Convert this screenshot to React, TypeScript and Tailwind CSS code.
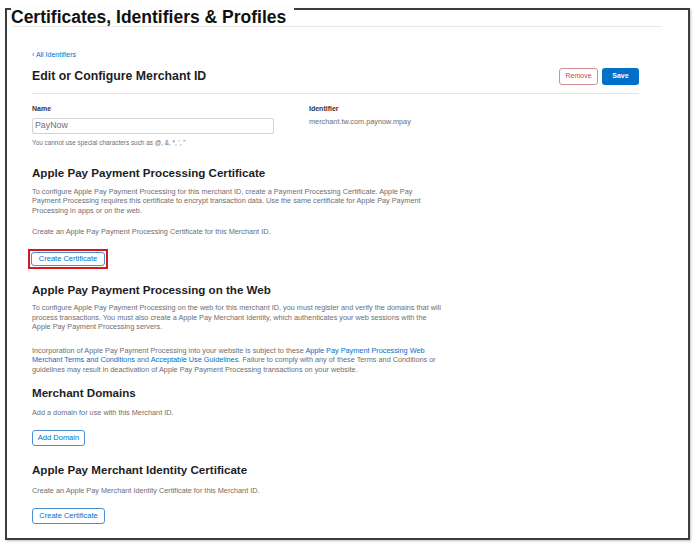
import React from 'react';

const body = 'text-[7.3px] leading-[9.6px] text-[#6e6e73] whitespace-nowrap';
const heading = 'text-[11.6px] leading-[14px] font-bold text-[#1d1d1f] whitespace-nowrap';
const link = 'text-[#0070c9]';

const OutlineButton: React.FC<{ label: string; className?: string }> = ({ label, className = '' }) => (
  <button
    className={`flex items-center justify-center rounded-[3px] border border-[#4b8fd3] bg-white px-[6px] text-[7.5px] leading-none text-[#0070c9] whitespace-nowrap ${className}`}
  >
    {label}
  </button>
);

export default function App() {
  return (
    <div className="h-[549px] w-[700px] overflow-hidden bg-white font-['Liberation_Sans',Arial,sans-serif]">
      <div className="ml-[5px] mt-[8px] h-[532px] w-[685px] border-2 border-[#3d3d3d] shadow-[1px_1px_2px_rgba(0,0,0,0.25)]">
        {/* page title sits over the frame's top edge */}
        <h1 className="-mt-[2px] ml-[4px] w-fit bg-white pr-[8px] text-[17.5px] font-bold leading-[18px] text-[#111]">
          Certificates, Identifiers &amp; Profiles
        </h1>
        <div className="ml-[5px] h-px w-[650px] bg-[#e8e8e8]" />

        <div className="pl-[25px]">
          <div className="mt-[24px] text-[7px] leading-[8px] text-[#0070c9]">‹ All Identifiers</div>

          <div className="mt-[8px] flex h-[19px] w-[607px] items-center justify-between">
            <h2 className="text-[12.3px] font-bold text-[#1d1d1f]">Edit or Configure Merchant ID</h2>
            <div className="flex gap-[4px]">
              <button className="flex h-[17px] w-[39px] items-center justify-center rounded-[3px] border border-[#d48d94] bg-white text-[7px] text-[#c9454f]">
                Remove
              </button>
              <button className="flex h-[17px] w-[37px] items-center justify-center rounded-[3px] bg-[#0070c9] text-[7px] font-bold text-white">
                Save
              </button>
            </div>
          </div>
          <div className="mt-[7px] h-px w-[607px] bg-[#e5e5e5]" />

          {/* Name / Identifier */}
          <div className="mt-[10px] flex">
            <div className="w-[277px]">
              <div className="text-[7px] font-bold leading-[9px] text-[#333]">Name</div>
              <div className="mt-[5px] flex h-[16px] w-[242px] items-center rounded-[2px] border border-[#d2d2d7] pl-[2px] text-[8.8px] text-[#6e6e73]">
                PayNow
              </div>
              <div className="mt-[4px] text-[6.4px] leading-[9.6px] text-[#6e6e73] whitespace-nowrap">
                You cannot use special characters such as @, &amp;, *, ', "
              </div>
            </div>
            <div>
              <div className="text-[7px] font-bold leading-[9px] text-[#333]">Identifier</div>
              <div className={`mt-[4px] ${body}`}>merchant.tw.com.paynow.mpay</div>
            </div>
          </div>

          {/* Payment processing certificate */}
          <h3 className={`mt-[18px] ${heading}`}>Apple Pay Payment Processing Certificate</h3>
          <p className={`mt-[7px] ${body}`}>
            To configure Apple Pay Payment Processing for this merchant ID, create a Payment Processing Certificate. Apple Pay
            <br />
            Payment Processing requires this certificate to encrypt transaction data. Use the same certificate for Apple Pay Payment
            <br />
            Processing in apps or on the web.
          </p>
          <p className={`mt-[12px] ${body}`}>Create an Apple Pay Payment Processing Certificate for this Merchant ID.</p>
          <div className="-ml-[4px] mt-[12px] w-fit border-2 border-[#d9161e] p-[1px]">
            <OutlineButton label="Create Certificate" className="h-[14px] w-[74px] rounded-[1px]" />
          </div>

          {/* Processing on the web */}
          <h3 className={`mt-[14px] ${heading}`}>Apple Pay Payment Processing on the Web</h3>
          <p className={`mt-[6px] ${body}`}>
            To configure Apple Pay Payment Processing on the web for this merchant ID, you must register and verify the domains that will
            <br />
            process transactions. You must also create a Apple Pay Merchant Identity, which authenticates your web sessions with the
            <br />
            Apple Pay Payment Processing servers.
          </p>
          <p className={`mt-[14px] ${body}`}>
            Incorporation of Apple Pay Payment Processing into your website is subject to these{' '}
            <span className={link}>Apple Pay Payment Processing Web</span>
            <br />
            <span className={link}>Merchant Terms and Conditions</span> and <span className={link}>Acceptable Use Guidelines</span>. Failure to
            comply with any of these Terms and Conditions or
            <br />
            guidelines may result in deactivation of Apple Pay Payment Processing transactions on your website.
          </p>

          {/* Merchant domains */}
          <h3 className={`mt-[11px] ${heading}`}>Merchant Domains</h3>
          <p className={`mt-[8.5px] ${body}`}>Add a domain for use with this Merchant ID.</p>
          <OutlineButton label="Add Domain" className="mt-[12px] h-[16px] w-[53px]" />

          {/* Merchant identity certificate */}
          <h3 className={`mt-[17px] ${heading}`}>Apple Pay Merchant Identity Certificate</h3>
          <p className={`mt-[9px] ${body}`}>Create an Apple Pay Merchant Identity Certificate for this Merchant ID.</p>
          <OutlineButton label="Create Certificate" className="mt-[13px] h-[15.5px] w-[73px]" />
        </div>
      </div>
    </div>
  );
}
